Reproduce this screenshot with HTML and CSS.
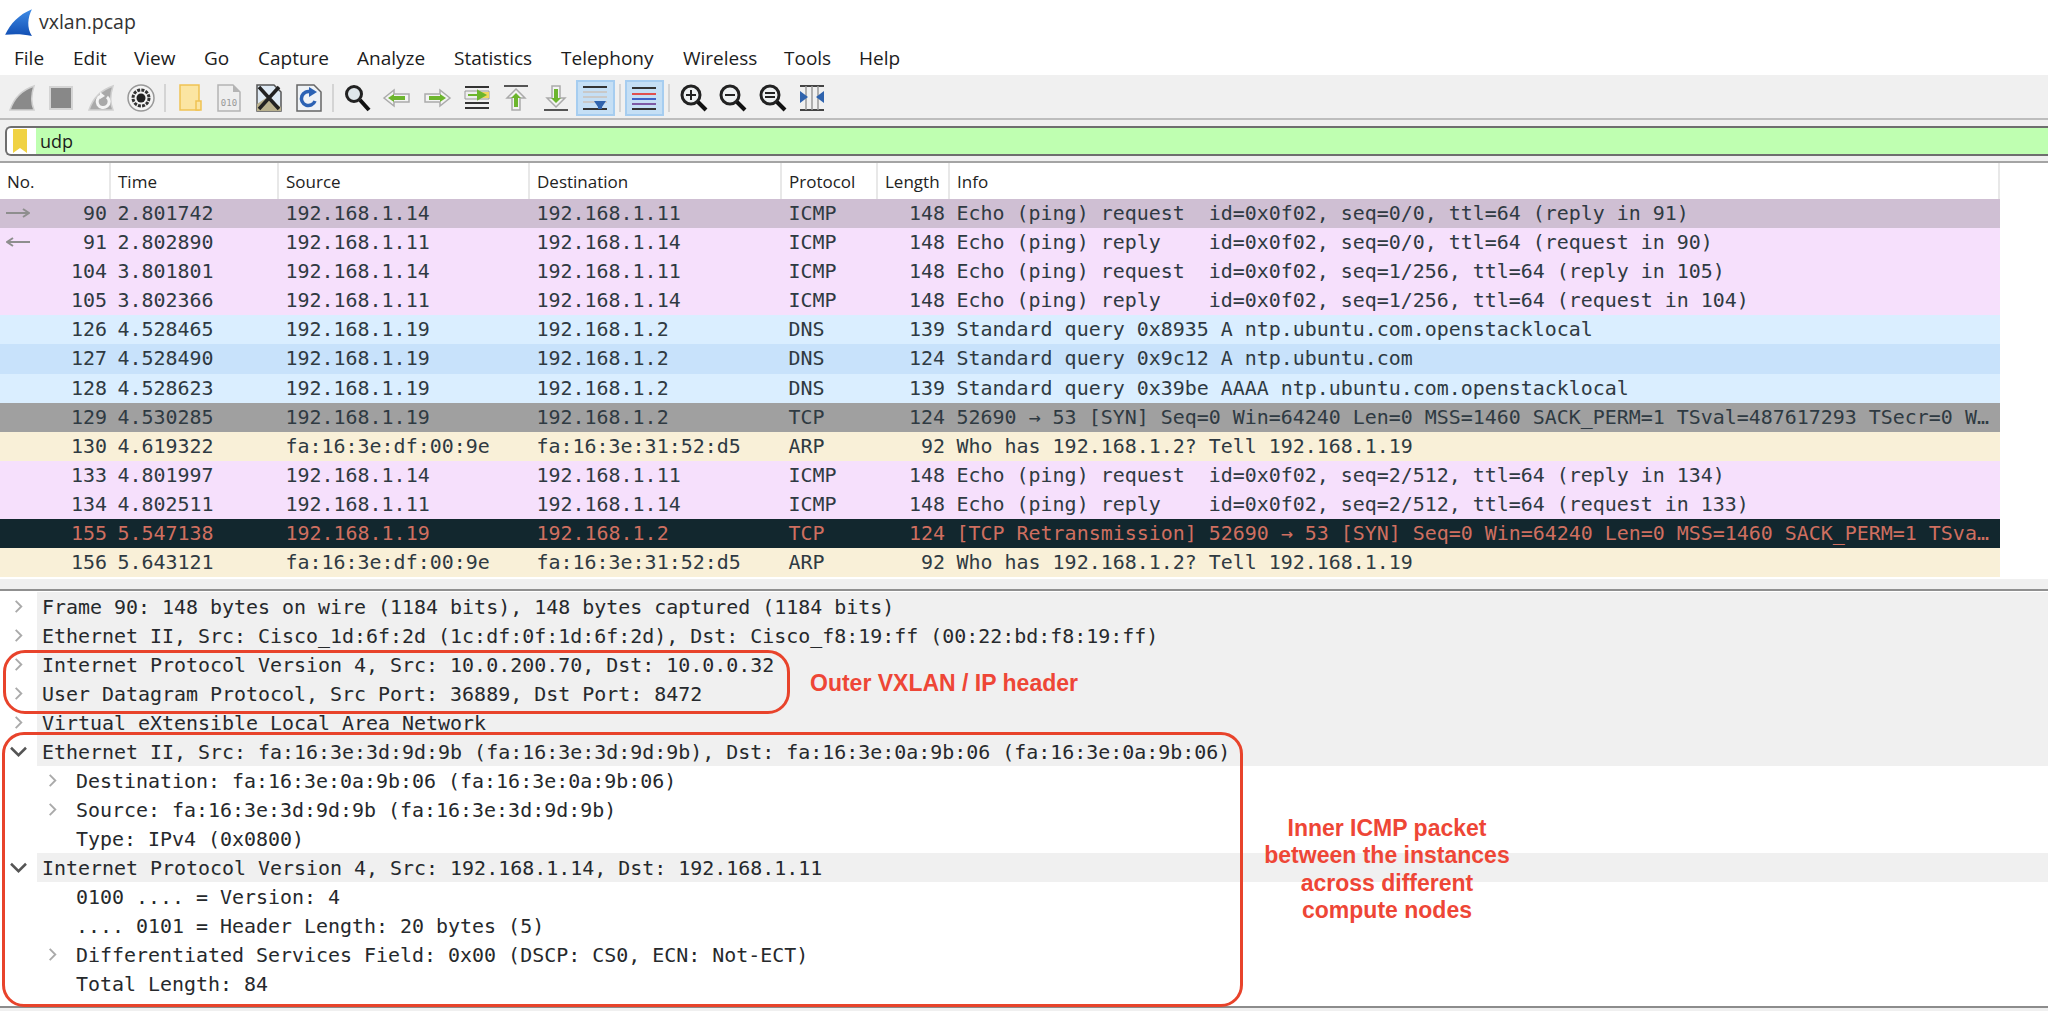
FILE: index.html
```html
<!DOCTYPE html>
<html lang="en">
<head>
    <meta charset="UTF-8">
    <meta name="viewport" content="width=device-width, initial-scale=1.0">
    <title>vxlan.pcap</title>
    <link rel="stylesheet" href="styles.css">
</head>
<body>
    <div class="title-bar">
        <svg class="logo" viewBox="0 0 28 28" width="30" height="30">
            <defs>
                <linearGradient id="fin" x1="0" y1="0" x2="0" y2="1">
                    <stop offset="0" stop-color="#3f8ce6"/>
                    <stop offset="1" stop-color="#124fb4"/>
                </linearGradient>
            </defs>
            <path d="M2 26C7 15 15 7 27 2C23 10 22 19 27 27C18 25 10 25 2 26Z" fill="url(#fin)"/>
        </svg>
        <span>vxlan.pcap</span>
    </div>

    <nav class="menu-bar">
        <span class="menu-file">File</span>
        <span class="menu-edit">Edit</span>
        <span class="menu-view">View</span>
        <span class="menu-go">Go</span>
        <span class="menu-capture">Capture</span>
        <span class="menu-analyze">Analyze</span>
        <span class="menu-statistics">Statistics</span>
        <span class="menu-telephony">Telephony</span>
        <span class="menu-wireless">Wireless</span>
        <span class="menu-tools">Tools</span>
        <span>Help</span>
    </nav>

    <div class="toolbar">
        <div class="tool"><svg viewBox="0 0 30 30"><path d="M3 27C7 15 15 7 27 3C24 12 24 20 27 27Z" fill="#8a8a8a" stroke="#d0d0d0" stroke-width="1.5"/></svg></div>
        <div class="tool"><svg viewBox="0 0 30 30"><rect x="4" y="4" width="22" height="22" fill="#888" stroke="#d4d4d4" stroke-width="2"/></svg></div>
        <div class="tool"><svg viewBox="0 0 30 30"><path d="M3 27C7 15 15 7 27 3C24 12 24 20 27 27Z" fill="#a9a9a9" stroke="#d0d0d0" stroke-width="1.5"/><path d="M21 14A6 6 0 1 1 15 13" fill="none" stroke="#f4f4f4" stroke-width="3"/><path d="M14 9L19 13L14 16Z" fill="#f4f4f4"/></svg></div>
        <div class="tool"><svg viewBox="0 0 30 30"><circle cx="15" cy="15" r="13" fill="#f4f4f4" stroke="#999" stroke-width="1.5"/><circle cx="15" cy="15" r="8" fill="none" stroke="#333" stroke-width="3" stroke-dasharray="3 1.2"/><circle cx="15" cy="15" r="4.5" fill="#222"/></svg></div>
        <div class="tool-sep"></div>
        <div class="tool"><svg viewBox="0 0 30 30"><path d="M5 2H24V27H5Z" fill="#fbe5a2" stroke="#efc253" stroke-width="1.5"/><path d="M21 27V18H26V27Z" fill="#fbe5a2" stroke="#efc253" stroke-width="1.5"/></svg></div>
        <div class="tool"><svg viewBox="0 0 30 30"><path d="M4 2H19L26 9V28H4Z" fill="#eee" stroke="#b4b4b4" stroke-width="1.5"/><path d="M19 2V9H26Z" fill="#b4b4b4"/><text x="15" y="23" class="bits">010</text></svg></div>
        <div class="tool"><svg viewBox="0 0 30 30"><path d="M3 2H20L27 9V28H3Z" fill="#dfeaf4" stroke="#555" stroke-width="1.5"/><path d="M3 21L12 15L27 24V28H3Z" fill="#b9b18e"/><path d="M5 4L25 26M25 4L5 26" stroke="#222" stroke-width="3.5"/></svg></div>
        <div class="tool"><svg viewBox="0 0 30 30"><path d="M3 2H20L27 9V28H3Z" fill="#eef2f6" stroke="#666" stroke-width="1.5"/><path d="M21 18A7 7 0 1 1 17 9" fill="none" stroke="#2b62b4" stroke-width="3.5"/><path d="M15 4L23 9L15 14Z" fill="#2b62b4"/></svg></div>
        <div class="tool-sep"></div>
        <div class="tool"><svg viewBox="0 0 30 30"><circle cx="11" cy="11" r="7.5" fill="#dfe6ea" stroke="#222" stroke-width="3"/><path d="M17 17L26 27" stroke="#111" stroke-width="4"/></svg></div>
        <div class="tool"><svg viewBox="0 0 30 30"><path d="M2 15L12 7V11H27V19H12V23Z" fill="#f3f3f3" stroke="#aaa" stroke-width="1.5"/><path d="M6 15L12 11V13H23V17H12V19Z" fill="#6cb52d"/></svg></div>
        <div class="tool"><svg viewBox="0 0 30 30"><path d="M28 15L18 7V11H3V19H18V23Z" fill="#f3f3f3" stroke="#aaa" stroke-width="1.5"/><path d="M24 15L18 11V13H7V17H18V19Z" fill="#6cb52d"/></svg></div>
        <div class="tool"><svg viewBox="0 0 30 30"><path d="M3 4H27M3 20H27M3 25H27" stroke="#333" stroke-width="2"/><path d="M3 8H27V16H3Z" fill="#eee" stroke="#999"/><rect x="20" y="9" width="7" height="6" fill="#f0d860"/><path d="M6 12H16M16 8L23 12L16 16Z" fill="#6cb52d" stroke="#6cb52d" stroke-width="2"/></svg></div>
        <div class="tool"><svg viewBox="0 0 30 30"><path d="M3 3H27" stroke="#555" stroke-width="2"/><path d="M15 6L24 15H19V27H11V15H6Z" fill="#f3f3f3" stroke="#aaa" stroke-width="1.5"/><path d="M15 10L20 15H17V24H13V15H10Z" fill="#6cb52d"/></svg></div>
        <div class="tool"><svg viewBox="0 0 30 30"><path d="M3 27H27" stroke="#555" stroke-width="2"/><path d="M15 24L24 15H19V3H11V15H6Z" fill="#f3f3f3" stroke="#aaa" stroke-width="1.5"/><path d="M15 20L20 15H17V6H13V15H10Z" fill="#6cb52d"/></svg></div>
        <div class="tool tool-on"><svg viewBox="0 0 30 30"><path d="M3 4H27M3 26H27" stroke="#333" stroke-width="2"/><path d="M3 9H27M3 14H27M3 19H27" stroke="#c9c9c9" stroke-width="2"/><path d="M14 18H26L22 24H18Z" fill="#2f63ad"/><path d="M18 24H22V26H18Z" fill="#2f63ad"/></svg></div>
        <div class="tool-sep"></div>
        <div class="tool tool-on"><svg viewBox="0 0 30 30"><path d="M3 5H27" stroke="#333" stroke-width="2"/><path d="M3 11H27" stroke="#e04f4f" stroke-width="2"/><path d="M3 16H27" stroke="#3f62c8" stroke-width="2"/><path d="M3 21H27" stroke="#7d5aa5" stroke-width="2"/><path d="M3 26H27" stroke="#333" stroke-width="2"/></svg></div>
        <div class="tool-sep"></div>
        <div class="tool"><svg viewBox="0 0 30 30"><circle cx="12" cy="12" r="9" fill="#eef1f2" stroke="#222" stroke-width="3"/><path d="M7 12H17M12 7V17" stroke="#222" stroke-width="2"/><path d="M19 19L27 27" stroke="#111" stroke-width="4"/></svg></div>
        <div class="tool"><svg viewBox="0 0 30 30"><circle cx="12" cy="12" r="9" fill="#eef1f2" stroke="#222" stroke-width="3"/><path d="M7 12H17" stroke="#222" stroke-width="2"/><path d="M19 19L27 27" stroke="#111" stroke-width="4"/></svg></div>
        <div class="tool"><svg viewBox="0 0 30 30"><circle cx="12" cy="12" r="9" fill="#eef1f2" stroke="#222" stroke-width="3"/><path d="M7 10H17M7 14H17" stroke="#222" stroke-width="2"/><path d="M19 19L27 27" stroke="#111" stroke-width="4"/></svg></div>
        <div class="tool"><svg viewBox="0 0 30 30"><path d="M3 3H27M3 27H27" stroke="#444" stroke-width="2"/><path d="M9 3V27M21 3V27M15 3V27" stroke="#999" stroke-width="1.5"/><path d="M3 8L11 14L3 20ZM27 8L19 14L27 20Z" fill="#2f63ad"/></svg></div>
    </div>

    <div class="filter-bar">
        <div class="filter-input">
            <div class="bookmark">
                <svg viewBox="0 0 14 24" width="14" height="24"><path d="M0 0H14V24L7 19L0 24Z" fill="#f0d243"/></svg>
            </div>
            <div class="filter-text">udp</div>
        </div>
    </div>

    <section class="packet-list">
        <div class="packet-table">
            <div class="packet-head">
                <span>No.</span><span>Time</span><span>Source</span><span>Destination</span><span>Protocol</span><span>Length</span><span>Info</span>
            </div>
            <div class="packet icmp-sel">
                <span class="no"><svg class="rel-arrow" viewBox="0 0 24 10"><path d="M0 5H23M17 1L23 5L17 9" fill="none" stroke="#8e8e8e" stroke-width="2"/></svg>90</span><span>2.801742</span><span>192.168.1.14</span><span>192.168.1.11</span><span>ICMP</span><span class="len">148</span><span class="info">Echo (ping) request  id=0x0f02, seq=0/0, ttl=64 (reply in 91)</span>
            </div>
            <div class="packet icmp">
                <span class="no"><svg class="rel-arrow" viewBox="0 0 24 10"><path d="M24 5H1M7 1L1 5L7 9" fill="none" stroke="#8e8e8e" stroke-width="2"/></svg>91</span><span>2.802890</span><span>192.168.1.11</span><span>192.168.1.14</span><span>ICMP</span><span class="len">148</span><span class="info">Echo (ping) reply    id=0x0f02, seq=0/0, ttl=64 (request in 90)</span>
            </div>
            <div class="packet icmp">
                <span class="no">104</span><span>3.801801</span><span>192.168.1.14</span><span>192.168.1.11</span><span>ICMP</span><span class="len">148</span><span class="info">Echo (ping) request  id=0x0f02, seq=1/256, ttl=64 (reply in 105)</span>
            </div>
            <div class="packet icmp">
                <span class="no">105</span><span>3.802366</span><span>192.168.1.11</span><span>192.168.1.14</span><span>ICMP</span><span class="len">148</span><span class="info">Echo (ping) reply    id=0x0f02, seq=1/256, ttl=64 (request in 104)</span>
            </div>
            <div class="packet dns">
                <span class="no">126</span><span>4.528465</span><span>192.168.1.19</span><span>192.168.1.2</span><span>DNS</span><span class="len">139</span><span class="info">Standard query 0x8935 A ntp.ubuntu.com.openstacklocal</span>
            </div>
            <div class="packet dns-alt">
                <span class="no">127</span><span>4.528490</span><span>192.168.1.19</span><span>192.168.1.2</span><span>DNS</span><span class="len">124</span><span class="info">Standard query 0x9c12 A ntp.ubuntu.com</span>
            </div>
            <div class="packet dns">
                <span class="no">128</span><span>4.528623</span><span>192.168.1.19</span><span>192.168.1.2</span><span>DNS</span><span class="len">139</span><span class="info">Standard query 0x39be AAAA ntp.ubuntu.com.openstacklocal</span>
            </div>
            <div class="packet tcp-syn">
                <span class="no">129</span><span>4.530285</span><span>192.168.1.19</span><span>192.168.1.2</span><span>TCP</span><span class="len">124</span><span class="info">52690 → 53 [SYN] Seq=0 Win=64240 Len=0 MSS=1460 SACK_PERM=1 TSval=487617293 TSecr=0 W…</span>
            </div>
            <div class="packet arp">
                <span class="no">130</span><span>4.619322</span><span>fa:16:3e:df:00:9e</span><span>fa:16:3e:31:52:d5</span><span>ARP</span><span class="len">92</span><span class="info">Who has 192.168.1.2? Tell 192.168.1.19</span>
            </div>
            <div class="packet icmp">
                <span class="no">133</span><span>4.801997</span><span>192.168.1.14</span><span>192.168.1.11</span><span>ICMP</span><span class="len">148</span><span class="info">Echo (ping) request  id=0x0f02, seq=2/512, ttl=64 (reply in 134)</span>
            </div>
            <div class="packet icmp">
                <span class="no">134</span><span>4.802511</span><span>192.168.1.11</span><span>192.168.1.14</span><span>ICMP</span><span class="len">148</span><span class="info">Echo (ping) reply    id=0x0f02, seq=2/512, ttl=64 (request in 133)</span>
            </div>
            <div class="packet tcp-bad">
                <span class="no">155</span><span>5.547138</span><span>192.168.1.19</span><span>192.168.1.2</span><span>TCP</span><span class="len">124</span><span class="info">[TCP Retransmission] 52690 → 53 [SYN] Seq=0 Win=64240 Len=0 MSS=1460 SACK_PERM=1 TSva…</span>
            </div>
            <div class="packet arp">
                <span class="no">156</span><span>5.643121</span><span>fa:16:3e:df:00:9e</span><span>fa:16:3e:31:52:d5</span><span>ARP</span><span class="len">92</span><span class="info">Who has 192.168.1.2? Tell 192.168.1.19</span>
            </div>
        </div>
    </section>

    <div class="splitter"></div>

    <section class="details">
        <div class="tree-row"><svg class="twisty" viewBox="0 0 12 16"><path d="M3 2L9 8L3 14" fill="none" stroke="#aaa" stroke-width="2"/></svg><div class="tree-text shaded">Frame 90: 148 bytes on wire (1184 bits), 148 bytes captured (1184 bits)</div></div>
        <div class="tree-row"><svg class="twisty" viewBox="0 0 12 16"><path d="M3 2L9 8L3 14" fill="none" stroke="#aaa" stroke-width="2"/></svg><div class="tree-text shaded">Ethernet II, Src: Cisco_1d:6f:2d (1c:df:0f:1d:6f:2d), Dst: Cisco_f8:19:ff (00:22:bd:f8:19:ff)</div></div>
        <div class="tree-row"><svg class="twisty" viewBox="0 0 12 16"><path d="M3 2L9 8L3 14" fill="none" stroke="#aaa" stroke-width="2"/></svg><div class="tree-text shaded">Internet Protocol Version 4, Src: 10.0.200.70, Dst: 10.0.0.32</div></div>
        <div class="tree-row"><svg class="twisty" viewBox="0 0 12 16"><path d="M3 2L9 8L3 14" fill="none" stroke="#aaa" stroke-width="2"/></svg><div class="tree-text shaded">User Datagram Protocol, Src Port: 36889, Dst Port: 8472</div></div>
        <div class="tree-row"><svg class="twisty" viewBox="0 0 12 16"><path d="M3 2L9 8L3 14" fill="none" stroke="#aaa" stroke-width="2"/></svg><div class="tree-text shaded">Virtual eXtensible Local Area Network</div></div>
        <div class="tree-row"><svg class="twisty" viewBox="0 0 16 12"><path d="M2 3L8 9L14 3" fill="none" stroke="#555" stroke-width="2"/></svg><div class="tree-text shaded">Ethernet II, Src: fa:16:3e:3d:9d:9b (fa:16:3e:3d:9d:9b), Dst: fa:16:3e:0a:9b:06 (fa:16:3e:0a:9b:06)</div></div>
        <div class="tree-row sub"><svg class="twisty" viewBox="0 0 12 16"><path d="M3 2L9 8L3 14" fill="none" stroke="#aaa" stroke-width="2"/></svg><div class="tree-text">Destination: fa:16:3e:0a:9b:06 (fa:16:3e:0a:9b:06)</div></div>
        <div class="tree-row sub"><svg class="twisty" viewBox="0 0 12 16"><path d="M3 2L9 8L3 14" fill="none" stroke="#aaa" stroke-width="2"/></svg><div class="tree-text">Source: fa:16:3e:3d:9d:9b (fa:16:3e:3d:9d:9b)</div></div>
        <div class="tree-row sub"><span class="twisty"></span><div class="tree-text">Type: IPv4 (0x0800)</div></div>
        <div class="tree-row"><svg class="twisty" viewBox="0 0 16 12"><path d="M2 3L8 9L14 3" fill="none" stroke="#555" stroke-width="2"/></svg><div class="tree-text shaded">Internet Protocol Version 4, Src: 192.168.1.14, Dst: 192.168.1.11</div></div>
        <div class="tree-row sub"><span class="twisty"></span><div class="tree-text">0100 .... = Version: 4</div></div>
        <div class="tree-row sub"><span class="twisty"></span><div class="tree-text">.... 0101 = Header Length: 20 bytes (5)</div></div>
        <div class="tree-row sub"><svg class="twisty" viewBox="0 0 12 16"><path d="M3 2L9 8L3 14" fill="none" stroke="#aaa" stroke-width="2"/></svg><div class="tree-text">Differentiated Services Field: 0x00 (DSCP: CS0, ECN: Not-ECT)</div></div>
        <div class="tree-row sub"><span class="twisty"></span><div class="tree-text">Total Length: 84</div></div>
    </section>

    <div class="note-box outer-box"></div>
    <div class="note-box inner-box"></div>
    <div class="note outer-note">Outer VXLAN / IP header</div>
    <div class="note inner-note">Inner ICMP packet<br>between the instances<br>across different<br>compute nodes</div>
</body>
</html>
```

FILE: styles.css
```css
body {
    margin: 0;
    height: 1011px;
    overflow: hidden;
    position: relative;
    background: #f0f0f0;
    font-family: "Open Sans", "Noto Sans", sans-serif;
    color: #1c1c1c;
}
.title-bar {
    height: 42px;
    background: white;
    display: flex;
    align-items: center;
    gap: 6px;
    padding-left: 3px;
    font-size: 19.5px;
    color: #333;
}
.logo {
    margin-top: 2px;
}
.menu-bar {
    height: 33px;
    background: white;
    display: flex;
    align-items: center;
    padding-left: 14px;
    padding-bottom: 2px;
    box-sizing: border-box;
    font-size: 19px;
}
.menu-file { width: 59px; }
.menu-edit { width: 61px; }
.menu-view { width: 70px; }
.menu-go { width: 54px; }
.menu-capture { width: 99px; }
.menu-analyze { width: 97px; }
.menu-statistics { width: 107px; }
.menu-telephony { width: 122px; }
.menu-wireless { width: 101px; }
.menu-tools { width: 75px; }
.toolbar {
    height: 45px;
    box-sizing: border-box;
    padding-top: 2px;
    border-bottom: 2px solid #bdbdbd;
    display: flex;
    align-items: center;
    padding-left: 2px;
}
.tool {
    width: 39.6px;
    height: 36px;
    box-sizing: border-box;
    display: flex;
    align-items: center;
    justify-content: center;
}
.tool svg {
    width: 30px;
    height: 30px;
}
.tool-on {
    background: #c5dff5;
    border: 2px solid #a6cdf0;
}
.tool-sep {
    width: 2px;
    height: 28px;
    margin: 0 3.8px;
    background: #d4d4d4;
}
.bits {
    font-family: "DejaVu Sans Mono", monospace;
    font-size: 9px;
    text-anchor: middle;
    fill: #999;
}
.filter-bar {
    height: 43px;
    box-sizing: border-box;
    padding: 6px 0 5px 5px;
    border-bottom: 2px solid #a4a4a4;
}
.filter-input {
    height: 30px;
    display: flex;
    border: 2px solid #6e6e6e;
    border-right: none;
    border-radius: 6px 0 0 6px;
    background: white;
    box-sizing: border-box;
}
.bookmark {
    width: 29px;
    display: flex;
    align-items: center;
    justify-content: center;
    padding-right: 4px;
    box-sizing: border-box;
}
.filter-text {
    flex: 1;
    background: #bfffb1;
    padding-left: 4px;
    font-size: 18px;
    line-height: 27px;
}
.packet-list {
    height: 416px;
    background: white;
}
.packet-table {
    width: 2000px;
}
.packet-head,
.packet {
    display: grid;
    grid-template-columns: 111px 168px 251px 252px 96px 72px 1050px;
}
.packet-head {
    height: 36px;
    font-size: 17px;
    line-height: 37px;
    color: #222;
}
.packet-head span {
    padding-left: 7px;
    border-right: 2px solid #e8e8e8;
    overflow: hidden;
}
.packet {
    height: 29.1px;
    line-height: 29px;
    font-family: "DejaVu Sans Mono", monospace;
    font-size: 19.95px;
    color: #2f3a42;
}
.packet span {
    padding-left: 6.6px;
    overflow: hidden;
    white-space: pre;
}
.packet .no {
    position: relative;
    text-align: right;
    padding-right: 4px;
}
.packet .len {
    text-align: right;
    padding-right: 5px;
}
.rel-arrow {
    position: absolute;
    left: 6px;
    top: 9px;
    width: 24px;
    height: 10px;
}
.icmp-sel { background: #cfbfd3; }
.icmp { background: #f6e0fc; }
.dns { background: #daeeff; }
.dns-alt { background: #c8e2fb; }
.tcp-syn { background: #a0a0a0; }
.arp { background: #f9f0d8; }
.tcp-bad {
    background: #12272e;
    color: #cf6f60;
}
.splitter {
    height: 12px;
    box-sizing: border-box;
    border-bottom: 2px solid #909090;
}
.details {
    height: 417px;
    padding-top: 1px;
    box-sizing: border-box;
    background: white;
    border-bottom: 2px solid #8c8c8c;
    overflow: hidden;
    font-family: "DejaVu Sans Mono", monospace;
    font-size: 19.95px;
    color: #26292c;
}
.tree-row {
    height: 29px;
    display: flex;
    align-items: center;
}
.tree-row.sub {
    padding-left: 34px;
}
.twisty {
    flex: 0 0 37px;
    height: 15px;
}
.tree-text {
    flex: 1;
    height: 29px;
    padding-left: 5px;
    line-height: 31px;
    white-space: pre;
}
.shaded {
    background: #f0f0f0;
}
.note-box {
    position: absolute;
    box-sizing: border-box;
    border: 3px solid #e8432b;
    border-radius: 22px;
}
.outer-box {
    left: 3px;
    top: 650px;
    width: 787px;
    height: 64px;
}
.inner-box {
    left: 2px;
    top: 732px;
    width: 1241px;
    height: 275px;
}
.note {
    position: absolute;
    font-family: "Liberation Sans", Arial, sans-serif;
    font-weight: bold;
    color: #ee4636;
}
.outer-note {
    left: 810px;
    top: 670px;
    font-size: 23px;
}
.inner-note {
    left: 1237px;
    top: 815px;
    width: 300px;
    text-align: center;
    font-size: 23px;
    line-height: 27.4px;
}
```
